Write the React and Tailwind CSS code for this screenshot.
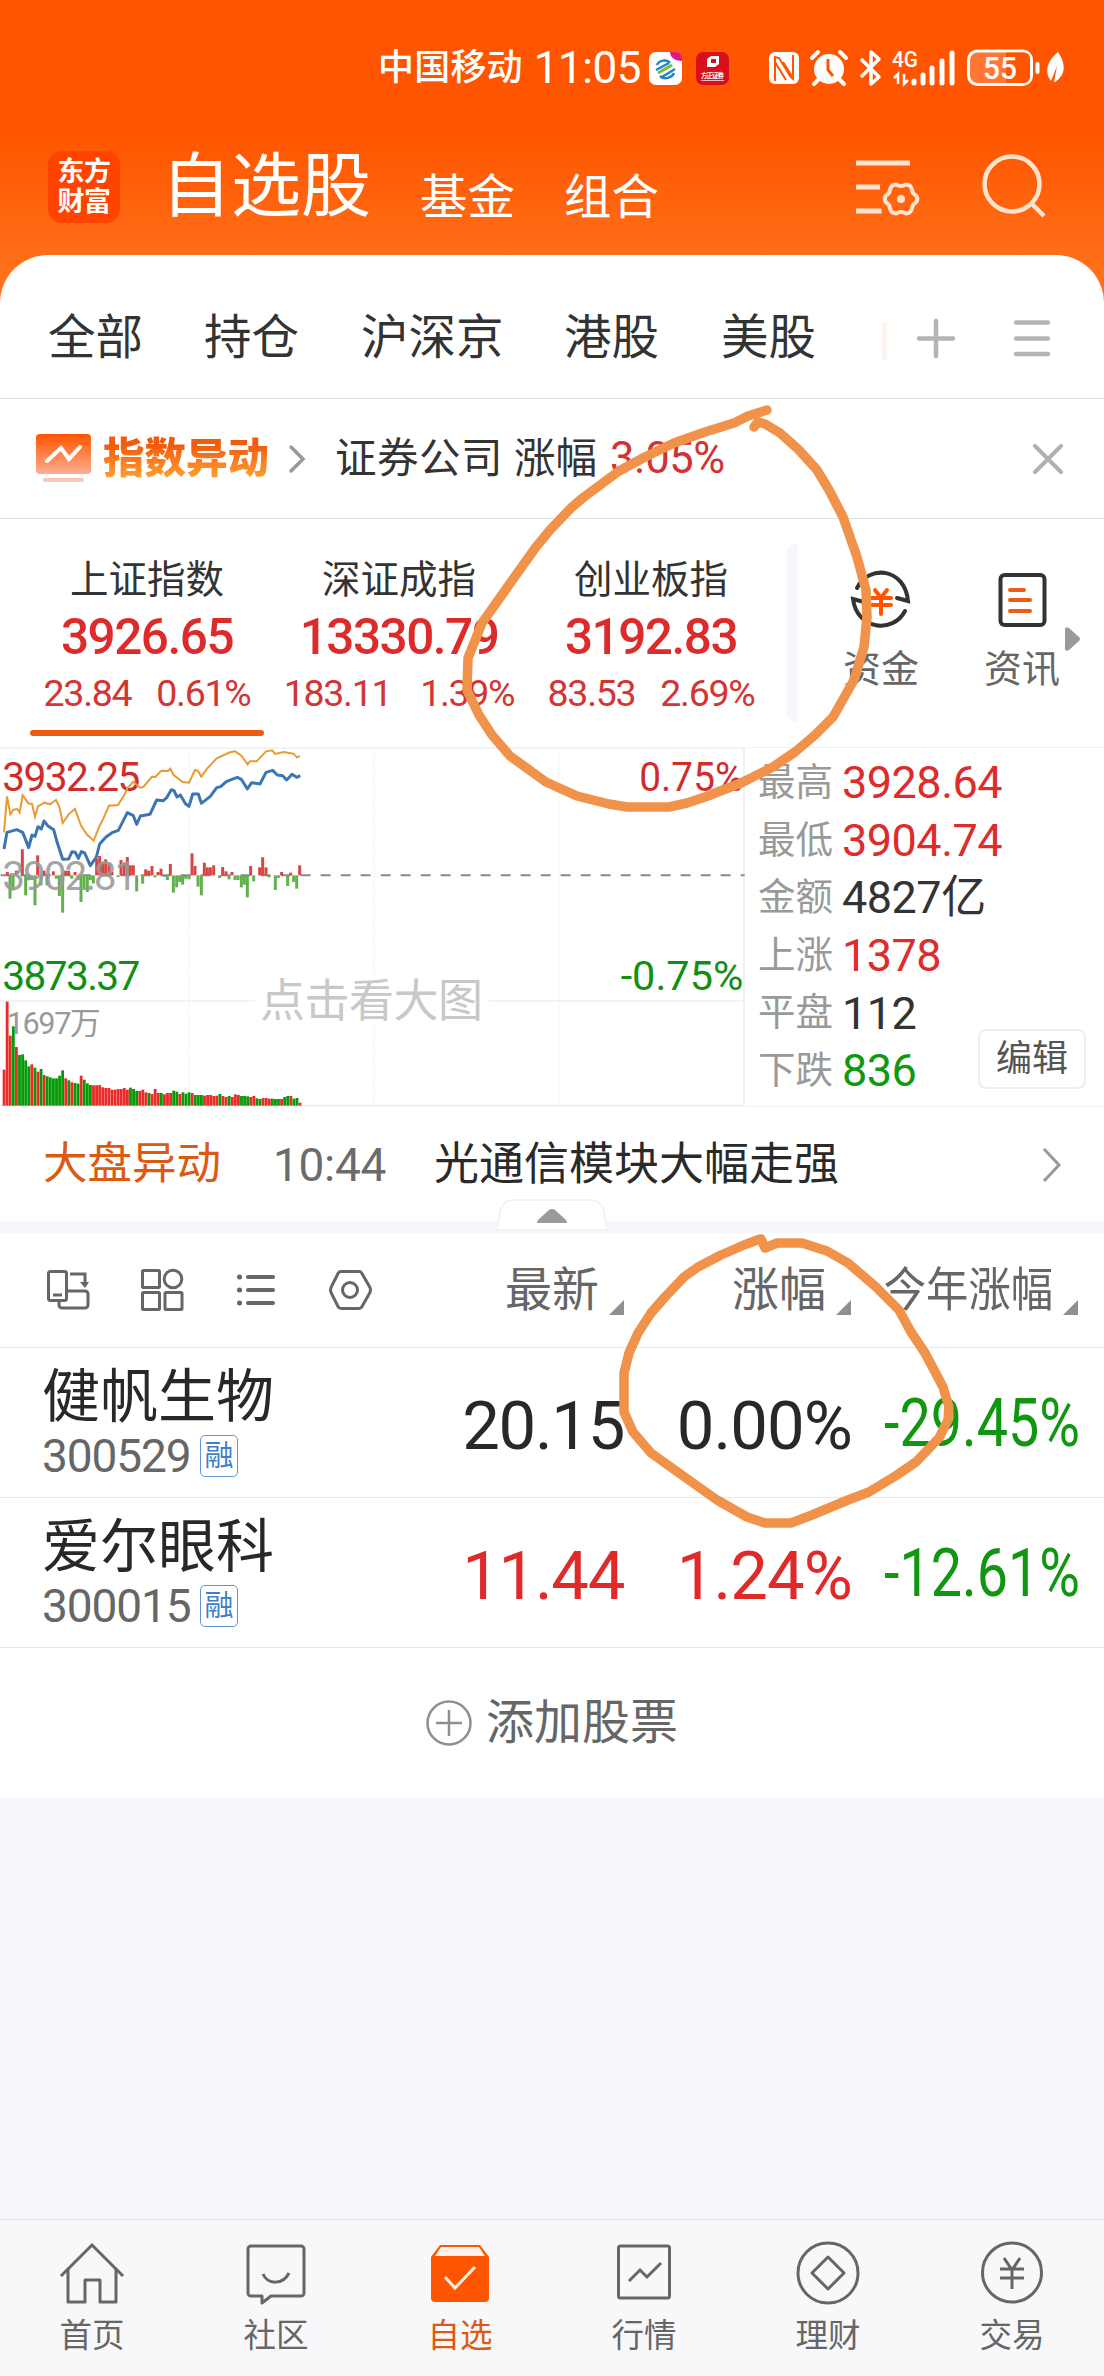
const indices = [
  { name: '上证指数', value: '3926.65', change: '23.84', rate: '0.61%', gap: 'gap-[25px]' },
  { name: '深证成指', value: '13330.79', change: '183.11', rate: '1.39%', gap: 'gap-[29px]' },
  { name: '创业板指', value: '3192.83', change: '83.53', rate: '2.69%', gap: 'gap-[25px]' },
]

const marketStats = [
  { label: '最高', value: '3928.64', color: 'text-[#dc2c2c]' },
  { label: '最低', value: '3904.74', color: 'text-[#dc2c2c]' },
  { label: '金额', value: '4827亿', color: 'text-[#333]' },
  { label: '上涨', value: '1378', color: 'text-[#dc2c2c]' },
  { label: '平盘', value: '112', color: 'text-[#333]' },
  { label: '下跌', value: '836', color: 'text-[#0f990f]' },
]

const stocks = [
  { name: '健帆生物', code: '300529', price: '20.15', rate: '0.00%', year: '-29.45%', color: 'text-[#282828]' },
  { name: '爱尔眼科', code: '300015', price: '11.44', rate: '1.24%', year: '-12.61%', color: 'text-[#e02a2a]' },
]

// [x, height], positive bars go up from the zero line
const flowBars = [
  [22, 10], [30, -70], [39, -45], [49, 14], [67, 78], [77, -60], [86, -15], [95, -14], [105, -90],
  [113, 60], [123, -30], [132, 14], [141, -30], [160, 12], [169, -10], [178, -62], [188, -112],
  [197, 14], [206, 14], [215, -10], [225, 10], [234, -14], [243, -80], [252, -40], [262, -50],
  [271, -14], [280, -24], [290, 50], [299, 58], [308, 40], [317, 48], [327, 35], [336, 10],
  [354, -5], [363, 46], [373, 38], [382, 55], [391, 30], [400, 30], [410, -48], [428, -25],
  [437, 18], [446, 14], [456, 28], [465, -6], [474, 10], [483, 20], [493, -5], [502, -14],
  [511, 34], [520, -52], [530, -36], [539, -20], [548, -28], [557, -10], [567, -12], [576, 66],
  [585, 28], [594, -34], [604, -60], [613, 38], [622, 24], [631, 24], [641, 30], [659, -8],
  [668, 25], [678, 12], [687, -12], [696, 10], [705, -14], [714, -14], [724, -36], [733, -28],
  [742, -66], [752, 28], [761, -18], [779, 24], [788, 54], [798, 24], [807, -6], [826, -44],
  [835, -8], [845, 10], [863, -32], [872, 8], [881, -20], [890, -40], [899, 30],
]

const volumes = [
  108, 312, 210, 238, 176, 152, 154, 136, 118, 124, 114, 102, 110, 92, 88, 85, 82, 82, 90, 106,
  82, 76, 70, 68, 66, 90, 78, 67, 62, 61, 61, 62, 55, 53, 53, 48, 48, 50, 50, 53,
  48, 54, 50, 44, 44, 48, 40, 38, 35, 50, 38, 38, 34, 38, 38, 45, 42, 35, 40, 36,
  40, 38, 32, 32, 32, 30, 32, 32, 29, 30, 35, 29, 26, 29, 26, 34, 32, 29, 29, 28,
  26, 29, 22, 20, 23, 23, 21, 21, 20, 20, 20, 26, 29, 29, 21, 23, 9,
]
const volumeColors =
  'RRRGRGGGGRGRGRGGGGGGRGRGGRGGGRRRRRRRRRRRRGGGRRRGRRRGRRRGGRGGGRGGGRRRRRGRRGRRRGGGRRGGRRRGGGRGGRGGR'

const navItems = [
  { label: '首页', icon: <HomeIcon /> },
  { label: '社区', icon: <CommunityIcon /> },
  { label: '自选', icon: <WatchIcon />, active: true },
  { label: '行情', icon: <QuotesIcon /> },
  { label: '理财', icon: <WealthIcon /> },
  { label: '交易', icon: <TradeIcon /> },
]

function HomeIcon() {
  return (
    <svg className="w-[68px] h-[68px]" viewBox="0 0 68 68" fill="none" stroke="#666" strokeWidth="3">
      <path d="M3 37 34 6l31 31" />
      <path d="M10 30v33h17V41h15v22h16V30" strokeLinejoin="round" />
    </svg>
  )
}

function CommunityIcon() {
  return (
    <svg className="w-[68px] h-[68px]" viewBox="0 0 68 68" fill="none" stroke="#666" strokeWidth="3" strokeLinejoin="round">
      <path d="M9 7h50a3 3 0 0 1 3 3v44a3 3 0 0 1-3 3H29l-9 7v-7H9a3 3 0 0 1-3-3V10a3 3 0 0 1 3-3z" />
      <path d="M21 35c5 11 20 11 26-1" />
    </svg>
  )
}

function WatchIcon() {
  return (
    <svg className="w-[68px] h-[68px]" viewBox="0 0 68 68" fill="none">
      <path d="M5 18 14 6h40l9 12v41a4 4 0 0 1-4 4H9a4 4 0 0 1-4-4z" fill="#ff5500" />
      <path d="M15 8h38l6 9H9z" fill="#fdf1ea" />
      <path d="m19 38 10 11 20-21" stroke="#fff0e0" strokeWidth="3" />
    </svg>
  )
}

function QuotesIcon() {
  return (
    <svg className="w-[68px] h-[68px]" viewBox="0 0 68 68" fill="none" stroke="#666" strokeWidth="3">
      <rect x="8.500" y="7" width="51" height="52" rx="2" />
      <path d="m19 42 11-11 7 7 14-14" />
    </svg>
  )
}

function WealthIcon() {
  return (
    <svg className="w-[68px] h-[68px]" viewBox="0 0 68 68" fill="none" stroke="#666" strokeWidth="3">
      <circle cx="34" cy="34" r="30" />
      <path d="m34 18 16 16-16 16-16-16z" strokeLinejoin="round" />
    </svg>
  )
}

function TradeIcon() {
  return (
    <svg className="w-[68px] h-[68px]" viewBox="0 0 68 68" fill="none" stroke="#666" strokeWidth="3">
      <circle cx="34" cy="33.500" r="29.500" />
      <path d="m26 19 8 12 8-12M22 30h24M22 39h24M34 30v20" />
    </svg>
  )
}

function StatusBar() {
  return (
    <div className="h-[134px] flex items-start pl-[378px] text-white">
      <div className="h-[135px] flex items-center text-[36px] leading-none tracking-[0.200px] font-medium">中国移动</div>
      <div className="h-[135px] flex items-center ml-[11px] w-[107px] text-[44px] leading-none tracking-[-0.500px]">11:05</div>
      <svg className="w-[430px] h-[56px] mt-[38px] ml-[5px]" viewBox="646 38 430 56" fill="none">
        <rect x="649" y="52" width="33" height="33" rx="7" fill="#fff" />
        <path d="M670 52h6a6 6 0 0 1 6 6v3c-6 0-12-3-12-9z" fill="#e5157f" />
        <path d="M657 65c2-5 10-6 13-2M656 70l13-7M662 77l13-8M660 76c4 4 12 2 14-3" stroke="#1f86c4" strokeWidth="2.500" />
        <path d="M658 73l14-8" stroke="#7db93c" strokeWidth="3" />
        <rect x="696" y="52" width="33" height="33" rx="7" fill="#d8101c" />
        <path d="M707 59l4-3h8v8l-4 3h-8z" fill="#fff" />
        <path d="M711 59h5v4h-5z" fill="#d8101c" />
        <text x="701" y="78" fontSize="6.500" fontWeight="700" fill="#fff" textLength="23">方正证券</text>
        <path d="M701 80.500h23" stroke="#f5b5b5" strokeWidth="1" />
        <rect x="769" y="52" width="30" height="32" rx="6" fill="#fff" />
        <path d="M775 81V57l4 1 11 18 3 3M775 57M793 55v23l-10-16M775 62l11 18" stroke="#ff5500" strokeWidth="2" />
        <circle cx="829" cy="69" r="15" fill="#fff" />
        <path d="m812 58 6-6M846 58l-6-6M818 80l-4 4M840 80l4 4" stroke="#fff" strokeWidth="4" strokeLinecap="round" />
        <path d="M828 59v11l5 6" stroke="#ff5500" strokeWidth="3" />
        <path d="m861 59 18 18-8 7V52l8 7-18 18" stroke="#fff" strokeWidth="3.500" strokeLinejoin="round" />
        <text x="892" y="67" fontSize="22" fontWeight="500" fill="#fff" textLength="26" lengthAdjust="spacingAndGlyphs">4G</text>
        <path d="M894 78l4-4v10M904 74v10l4-4" stroke="#fff" strokeWidth="2.500" />
        <path d="M914 81v2M923 75v8M932 68v15M942 61v22M952 53v30" stroke="#fff" strokeWidth="5" strokeLinecap="round" />
        <rect x="968.500" y="51" width="63" height="33.500" rx="9" fill="#ff7733" stroke="#fff" strokeWidth="3" />
        <path d="M1006 52.500h18a6 6 0 0 1 6 6V77a6 6 0 0 1-6 6h-18z" fill="#ff5500" />
        <text x="1000" y="79" fontSize="32" fontWeight="500" fill="#fff" textAnchor="middle" textLength="34" lengthAdjust="spacingAndGlyphs">55</text>
        <path d="M1037.500 64v8" stroke="#fff" strokeWidth="4" strokeLinecap="round" />
        <path d="M1058 52c9 13 7 24-3 30l-1 0 3-16-6 15c-7-9-4-20 7-29z" fill="#fff" />
      </svg>
    </div>
  )
}

function Header() {
  return (
    <div className="h-[121px] flex items-start">
      <div className="mt-[17px] ml-[48px] w-[72px] h-[72px] rounded-[14px] bg-[#ff4400] flex flex-col items-center justify-center gap-[3px] text-white text-[27px] leading-[27px] font-bold tracking-[-0.500px]">
        <span>东方</span>
        <span>财富</span>
      </div>
      <div className="flex items-end text-white leading-none mt-[18px]">
        <span className="ml-[41px] w-[259px] text-[70px]">自选股</span>
        <span className="w-[144px] text-[47.500px]">基金</span>
        <span className="text-[47.500px]">组合</span>
      </div>
      <svg className="w-[200px] h-[70px] ml-auto mt-[16px] mr-[55px]" viewBox="848 150 200 70" fill="none" stroke="#ffe3cf">
        <path d="M855 163h54M855 187h24M855 211h25.500" strokeWidth="5" />
        <path
          d="M895 184.500q5 3 10 0c3 0 5 1.500 6 5q0 4 4 6c1.500 2 1.500 5 0 7q-4 2-4 6c-1 3.500-3 5-6 5q-5-3-10 0c-3 0-5-1.500-6-5q0-4-4-6c-1.500-2-1.500-5 0-7q4-2 4-6c1-3.500 3-5 6-5z"
          strokeWidth="4"
        />
        <circle cx="900" cy="199" r="4" fill="#ffe3cf" stroke="none" />
        <circle cx="1011" cy="184" r="27.500" strokeWidth="4.500" />
        <path d="m1030 203 13 13" strokeWidth="4.500" />
      </svg>
    </div>
  )
}

function MarketTabs() {
  return (
    <div className="h-[144px] border-b border-[#e2e2e2] flex items-center pt-[25px] text-[47.500px] leading-none text-[#333]">
      <span className="ml-[48px] w-[156px]">全部</span>
      <span className="w-[157px]">持仓</span>
      <span className="w-[203px]">沪深京</span>
      <span className="w-[157px]">港股</span>
      <span>美股</span>
      <svg className="w-[170px] h-[44px] ml-auto mr-[52px]" viewBox="882 317 170 44" fill="none" stroke="#b4b4b4" strokeWidth="4.500" strokeLinecap="round">
        <path d="M884.500 322v38" stroke="#fff2ec" strokeWidth="4" strokeLinecap="butt" />
        <path d="M919 338.500h34M936 321v35M1016 322.500h32M1016 338.500h32M1016 354h32" />
      </svg>
    </div>
  )
}

function AlertBanner() {
  return (
    <div className="h-[120px] border-b border-[#e2e2e2] flex items-center pl-[36px] text-[#333]">
      <svg className="w-[55px] h-[50px]" viewBox="0 0 55 50" fill="none">
        <defs>
          <linearGradient id="banner" x1="0" y1="0" x2="0" y2="1">
            <stop offset="0" stopColor="#ff5500" />
            <stop offset="1" stopColor="#fbae91" />
          </linearGradient>
        </defs>
        <rect width="55" height="40" rx="4" fill="url(#banner)" />
        <path d="m11 27 14-13 8 11 11-12" stroke="#fff" strokeWidth="4" strokeLinecap="round" />
        <path d="M9 46h37" stroke="#f7c8b4" strokeWidth="4" strokeLinecap="round" />
      </svg>
      <span className="ml-[12px] text-[41.500px] leading-[46px] font-black bg-gradient-to-b from-[#f25a0c] from-20% to-[#ff9d2e] to-90% bg-clip-text text-transparent">
        指数异动
      </span>
      <svg className="ml-[19px] w-[18px] h-[30px]" viewBox="0 0 18 30" fill="none" stroke="#999" strokeWidth="3.500" strokeLinecap="round">
        <path d="m3 3 12 12L3 27" />
      </svg>
      <span className="ml-[29px] text-[41.500px] tracking-[0.500px] leading-none">证券公司</span>
      <span className="ml-[11px] text-[41.500px] leading-none">涨幅</span>
      <span className="ml-[13px] text-[43.500px] leading-none tracking-[-0.400px] text-[#d33232]">3.05%</span>
      <svg className="ml-auto mr-[39px] w-[34px] h-[34px]" viewBox="0 0 34 34" fill="none" stroke="#b0b0b0" strokeWidth="4" strokeLinecap="round">
        <path d="m4 4 26 26M30 4 4 30" />
      </svg>
    </div>
  )
}

function IndexRow() {
  return (
    <div className="h-[228px] flex">
      <div className="flex pl-[21px]">
        {indices.map((item, i) => (
          <div key={item.name} className="w-[252px] flex flex-col items-center leading-none whitespace-nowrap">
            <div className="mt-[42px] h-[40px] text-[38.500px] text-[#333]">{item.name}</div>
            <div className="mt-[12px] h-[50px] text-[49.500px] font-medium tracking-[-1.500px] text-[#dd2a2a]">{item.value}</div>
            <div className={`mt-[12px] h-[38px] flex text-[37.500px] tracking-[-1.300px] text-[#d33434] ${item.gap}`}>
              <span>{item.change}</span>
              <span>{item.rate}</span>
            </div>
            {i === 0 && <div className="mt-[17px] w-[234px] h-[6px] rounded-full bg-[#ee5a12]" />}
          </div>
        ))}
      </div>
      <div className="mt-[24px] ml-[9px] w-[12px] h-[180px] rounded-l-[12px] bg-[#f6f7fa]" />
      <div className="mt-[49px] ml-[45px] flex text-[38px] leading-none text-[#666]">
        <div className="w-[76px] flex flex-col items-center">
          <svg className="w-[64px] h-[64px]" viewBox="0 0 64 64" fill="none" stroke="#333" strokeWidth="4">
            <path d="M8 20C20-4 56 0 59 33L48 30M56 43C44 66 8 62 4 31l11 3" strokeLinecap="round" />
            <path d="m26 22 6 8 6-8M22 30h20M22 37h20M32 30v16" stroke="#ff5500" strokeLinecap="round" />
          </svg>
          <span className="mt-[18px]">资金</span>
        </div>
        <div className="ml-[65px] w-[76px] flex flex-col items-center">
          <svg className="w-[64px] h-[64px]" viewBox="0 0 64 64" fill="none" stroke="#333" strokeWidth="4">
            <rect x="10.500" y="7" width="44" height="50" rx="4" />
            <path d="M20 22h14M20 32h20M20 43h20" stroke="#ec5c14" strokeLinecap="round" />
          </svg>
          <span className="mt-[18px]">资讯</span>
        </div>
        <svg className="ml-[4px] mt-[58px] w-[17px] h-[26px]" viewBox="0 0 17 26" fill="#999">
          <path d="M1 3q1-3 4-1l10 9q2 2 0 4L5 24q-3 2-4-1z" />
        </svg>
      </div>
    </div>
  )
}

function IndexChart() {
  return (
    <svg className="w-[746px] h-[360px] shrink-0" viewBox="0 36 2238 1080" fill="none">
      <path d="M0 39h2235M0 798h2235M0 1112h2235M2232 39v1073" stroke="#eeeff0" strokeWidth="5" />
      <path d="M567 44v1066M1122 44v1066M1676 44v1066" stroke="#eee" strokeWidth="4" strokeDasharray="4 6" />
      <path d="M2 421h2232" stroke="#8a8a8a" strokeWidth="6" strokeDasharray="30 30" />
      <g fontSize="122">
        <text x="7" y="167" fill="#d02c2c" textLength="414">3932.25</text>
        <text x="7" y="765" fill="#138f13" textLength="414">3873.37</text>
        <text x="1918" y="167" fill="#d02c2c" textLength="312" lengthAdjust="spacingAndGlyphs">0.75%</text>
        <text x="1862" y="765" fill="#138f13" textLength="368" lengthAdjust="spacingAndGlyphs">-0.75%</text>
      </g>
      {flowBars.map(([x, v]) => (
        <rect key={x} x={x - 4.5} y={v > 0 ? 421 - v : 421} width="9" height={Math.abs(v)} fill={v > 0 ? '#d94545' : '#62b04c'} />
      ))}
      <text x="7" y="464" fontSize="122" fill="#999" fillOpacity="0.9" textLength="405">3902.81</text>
      {volumes.map((v, i) => (
        <rect key={i} x={8 + i * 9.25} y={1112 - v} width="8.500" height={v} fill={volumeColors[i] === 'R' ? '#e92c28' : '#069a08'} />
      ))}
      <text x="20" y="897" fontSize="92" fill="#999" textLength="282">1697万</text>
      <rect x="765" y="718" width="700" height="150" fill="#fff" />
      <text x="780" y="846" fontSize="135" fill="#c8c8c8" textLength="669">点击看大图</text>
      <path
        d="M12 292 21 184 31 238 40 224 52 222 59 232 68 181 86 206 96 206 105 245 114 214 133 203 150 208 168 195 178 215 188 264 206 238 225 222 243 272 262 300 281 317 299 272 308 255 327 212 354 210 373 180 382 160 400 140 420 158 430 156 456 125 466 126 484 107 504 108 511 101 521 120 548 141 567 143 585 105 594 108 604 125 622 100 650 70 690 52 706 49 724 62 743 88 750 79 770 79 798 49 816 46 826 57 850 51 880 56 891 67 900 63"
        stroke="#e99b33"
        strokeWidth="6"
      />
      <path
        d="M12 342 21 292 50 284 68 292 86 338 96 300 105 304 114 275 124 282 132 258 143 272 161 284 170 317 188 373 206 372 216 350 226 352 235 370 244 350 254 354 271 392 289 366 299 327 318 306 336 293 355 286 382 233 400 242 410 268 421 243 450 238 470 195 490 197 500 188 514 164 522 167 531 186 541 180 557 207 567 214 578 177 595 177 604 205 631 184 650 158 662 155 680 139 712 127 724 133 742 162 755 143 780 147 798 112 818 106 832 120 848 122 860 135 876 118 890 127 901 122"
        stroke="#3d74b4"
        strokeWidth="9"
        strokeLinejoin="round"
      />
    </svg>
  )
}

function MarketPanel() {
  return (
    <div className="h-[360px] flex relative">
      <IndexChart />
      <div className="flex-1 pl-[12px] pt-[6px] border-t border-[#f1f1f1] border-b">
        {marketStats.map(s => (
          <div key={s.label} className="h-[57.600px] flex items-center leading-none">
            <span className="w-[84px] text-[37.500px] text-[#999]">{s.label}</span>
            <span className={`text-[45px] tracking-[-0.500px] ${s.color}`}>{s.value}</span>
          </div>
        ))}
      </div>
      <button className="absolute right-[18px] bottom-[18px] w-[108px] h-[60px] rounded-[8px] border-2 border-[#eee] bg-white text-[36px] leading-none text-[#555]">
        编辑
      </button>
    </div>
  )
}

function NewsRow() {
  return (
    <>
      <div className="h-[114px] flex items-center pt-[1px] pl-[43px] text-[45px] leading-none">
        <span className="w-[230px] text-[44.500px] text-[#dc5a10]">大盘异动</span>
        <span className="w-[161px] text-[46px] tracking-[-0.300px] text-[#6b6b6b]">10:44</span>
        <span className="text-[#2a2a2a]">光通信模块大幅走强</span>
        <svg className="ml-auto mr-[42px] w-[20px] h-[36px]" viewBox="0 0 20 36" fill="none" stroke="#999" strokeWidth="3">
          <path d="m2 2 15 16L2 34" />
        </svg>
      </div>
      <div className="h-[12px] bg-[#f6f7fa] relative">
        <svg className="absolute left-[494px] bottom-[2px] w-[116px] h-[34px]" viewBox="0 0 116 34" fill="none">
          <path d="M3 33 6 16C8 5 13 3 20 3h75c9 0 14 4 15 13l3 17z" fill="#fff" stroke="#f1f1f3" strokeWidth="1.500" />
          <path d="M43 26q0-2 2-4l10-9q3-2 6 0l10 9q2 2 2 4z" fill="#999" />
        </svg>
      </div>
    </>
  )
}

function SortMark() {
  return (
    <svg className="w-[15px] h-[15px] ml-[10px] mt-[34px] shrink-0" viewBox="0 0 15 15" fill="#8f8f96">
      <path d="M15 0v15H0z" />
    </svg>
  )
}

function TableHeader() {
  return (
    <div className="h-[115px] border-b border-[#e8e8e8] flex items-center text-[47px] leading-none text-[#666]">
      <svg className="ml-[44px] w-[330px] h-[46px] shrink-0" viewBox="44 1267 330 46" fill="none" stroke="#666" strokeWidth="3">
        <rect x="48.500" y="1271.500" width="18" height="29" rx="2" />
        <path d="M53 1295h9" />
        <path d="M70 1274h15v10" />
        <path d="m80 1282 5 6 4-6z" fill="#666" stroke="none" />
        <path d="M67 1291h18a3 3 0 0 1 3 3v11a3 3 0 0 1-3 3H62a3 3 0 0 1-3-3v-4" />
        <rect x="142.500" y="1270.500" width="17" height="17" rx="1" />
        <circle cx="173" cy="1279" r="8.800" />
        <rect x="142.500" y="1292.500" width="17" height="17" rx="1" />
        <rect x="165" y="1292.500" width="17" height="17" rx="1" />
        <path d="M248 1277h25M248 1290h25M248 1303h25" strokeWidth="4" strokeLinecap="round" />
        <path d="M239.500 1277h.1M239.500 1290h.1M239.500 1303h.1" strokeWidth="5" strokeLinecap="round" />
        <path d="M341 1271.500h18q2 0 3 2l8 14q1 2 0 5l-8 14q-1 2-3 2h-18q-2 0-3-2l-7-14q-1-3 0-5l7-14q1-2 3-2z" />
        <circle cx="350" cy="1290" r="7.500" />
      </svg>
      <div className="flex-1 flex justify-end">
        <span>最新</span>
        <SortMark />
      </div>
      <div className="w-[227px] flex justify-end">
        <span>涨幅</span>
        <SortMark />
      </div>
      <div className="w-[227px] mr-[26px] flex justify-end whitespace-nowrap">
        <span className="origin-right scale-x-90">今年涨幅</span>
        <SortMark />
      </div>
    </div>
  )
}

function StockRow({ stock }) {
  return (
    <div className="h-[150px] border-b border-[#e8e8e8] flex items-start leading-none">
      <div className="w-[380px] pl-[42px] pt-[20px]">
        <div className="text-[58px] text-[#282828]">{stock.name}</div>
        <div className="mt-[7px] flex items-center">
          <span className="text-[46px] tracking-[-1.100px] w-[158px] text-[#666]">{stock.code}</span>
          <span className="w-[38px] h-[42px] rounded-[5px] border-[1.500px] border-[#5d97d2] text-[29px] text-[#3f7fc8] flex items-center justify-center">
            融
          </span>
        </div>
      </div>
      <span className={`mt-[45px] w-[244px] text-right text-[67px] tracking-[-1.300px] ${stock.color}`}>{stock.price}</span>
      <span className={`mt-[45px] w-[228px] text-right text-[67px] tracking-[-0.900px] ${stock.color}`}>{stock.rate}</span>
      <span className="mt-[42px] w-[228px] flex justify-end text-[67px] text-[#109610]">
        <span className="origin-right scale-x-[0.83]">{stock.year}</span>
      </span>
    </div>
  )
}

function BottomNav() {
  return (
    <div className="h-[157px] bg-[#f8f8fa] border-t border-[#e0e2e5] flex">
      {navItems.map(item => (
        <div key={item.label} className="flex-1 flex flex-col items-center pt-[19px]">
          {item.icon}
          <span className={`mt-[13px] text-[32.500px] leading-none ${item.active ? 'text-[#dc5a14]' : 'text-[#666]'}`}>{item.label}</span>
        </div>
      ))}
    </div>
  )
}

// hand-drawn circles over the page
function Marks() {
  return (
    <svg
      className="absolute left-0 top-0 w-[1104px] h-[2376px] pointer-events-none"
      viewBox="0 0 1104 2376"
      fill="none"
      stroke="#f0924a"
      strokeWidth="9.500"
      strokeLinecap="round"
      strokeLinejoin="round"
    >
      <path d="M767 410 748 416 734 423 705 432 674 443 645 457 619 471 584 497 571 508 550 530 536 547 511 582 482 623 468 658 467 690 479 715 492 735 510 756 546 782 577 796 609 804 627 807H669L687 803 705 797 741 783 773 767 795 752 815 735 833 717 854 680 864 647 867 617 866 590 857 557 843 517 829 490 817 470 799 450 780 433 765 424 758 422 754 427" />
      <path d="M760 1239 744 1245 721 1255 698 1267 684 1277 665 1297 651 1313 638 1333 629 1353 624 1373V1412L633 1432 651 1453 679 1473 717 1500 747 1517 765 1523H791L812 1515 848 1500 869 1492 897 1475 916 1462 939 1438 948 1420 949 1407 943 1387 925 1353 911 1332 899 1310 876 1287 848 1263 827 1251 802 1243H777L765 1248 761 1239" />
    </svg>
  )
}

export default function App() {
  return (
    <div className="relative w-[1104px] h-[2376px] overflow-hidden flex flex-col bg-[#f6f7fa] font-['Roboto','Noto_Sans_CJK_SC',sans-serif]">
      <div className="bg-linear-to-b from-[#ff5500] from-[130px] to-[#ff7018] to-[270px]">
        <StatusBar />
        <Header />
        <div className="bg-white rounded-t-[48px]">
          <MarketTabs />
        </div>
      </div>
      <div className="bg-white">
        <AlertBanner />
        <IndexRow />
        <MarketPanel />
        <NewsRow />
        <TableHeader />
        {stocks.map(stock => (
          <StockRow key={stock.code} stock={stock} />
        ))}
        <div className="h-[150px] flex items-center justify-center gap-[14px] text-[48px] leading-none text-[#666]">
          <svg className="w-[46px] h-[46px]" viewBox="0 0 46 46" fill="none" stroke="#8f8f8f" strokeWidth="2.500">
            <circle cx="23" cy="23" r="21.500" />
            <path d="M10 23h26M23 10v26" />
          </svg>
          添加股票
        </div>
      </div>
      <div className="flex-1" />
      <BottomNav />
      <Marks />
    </div>
  )
}
